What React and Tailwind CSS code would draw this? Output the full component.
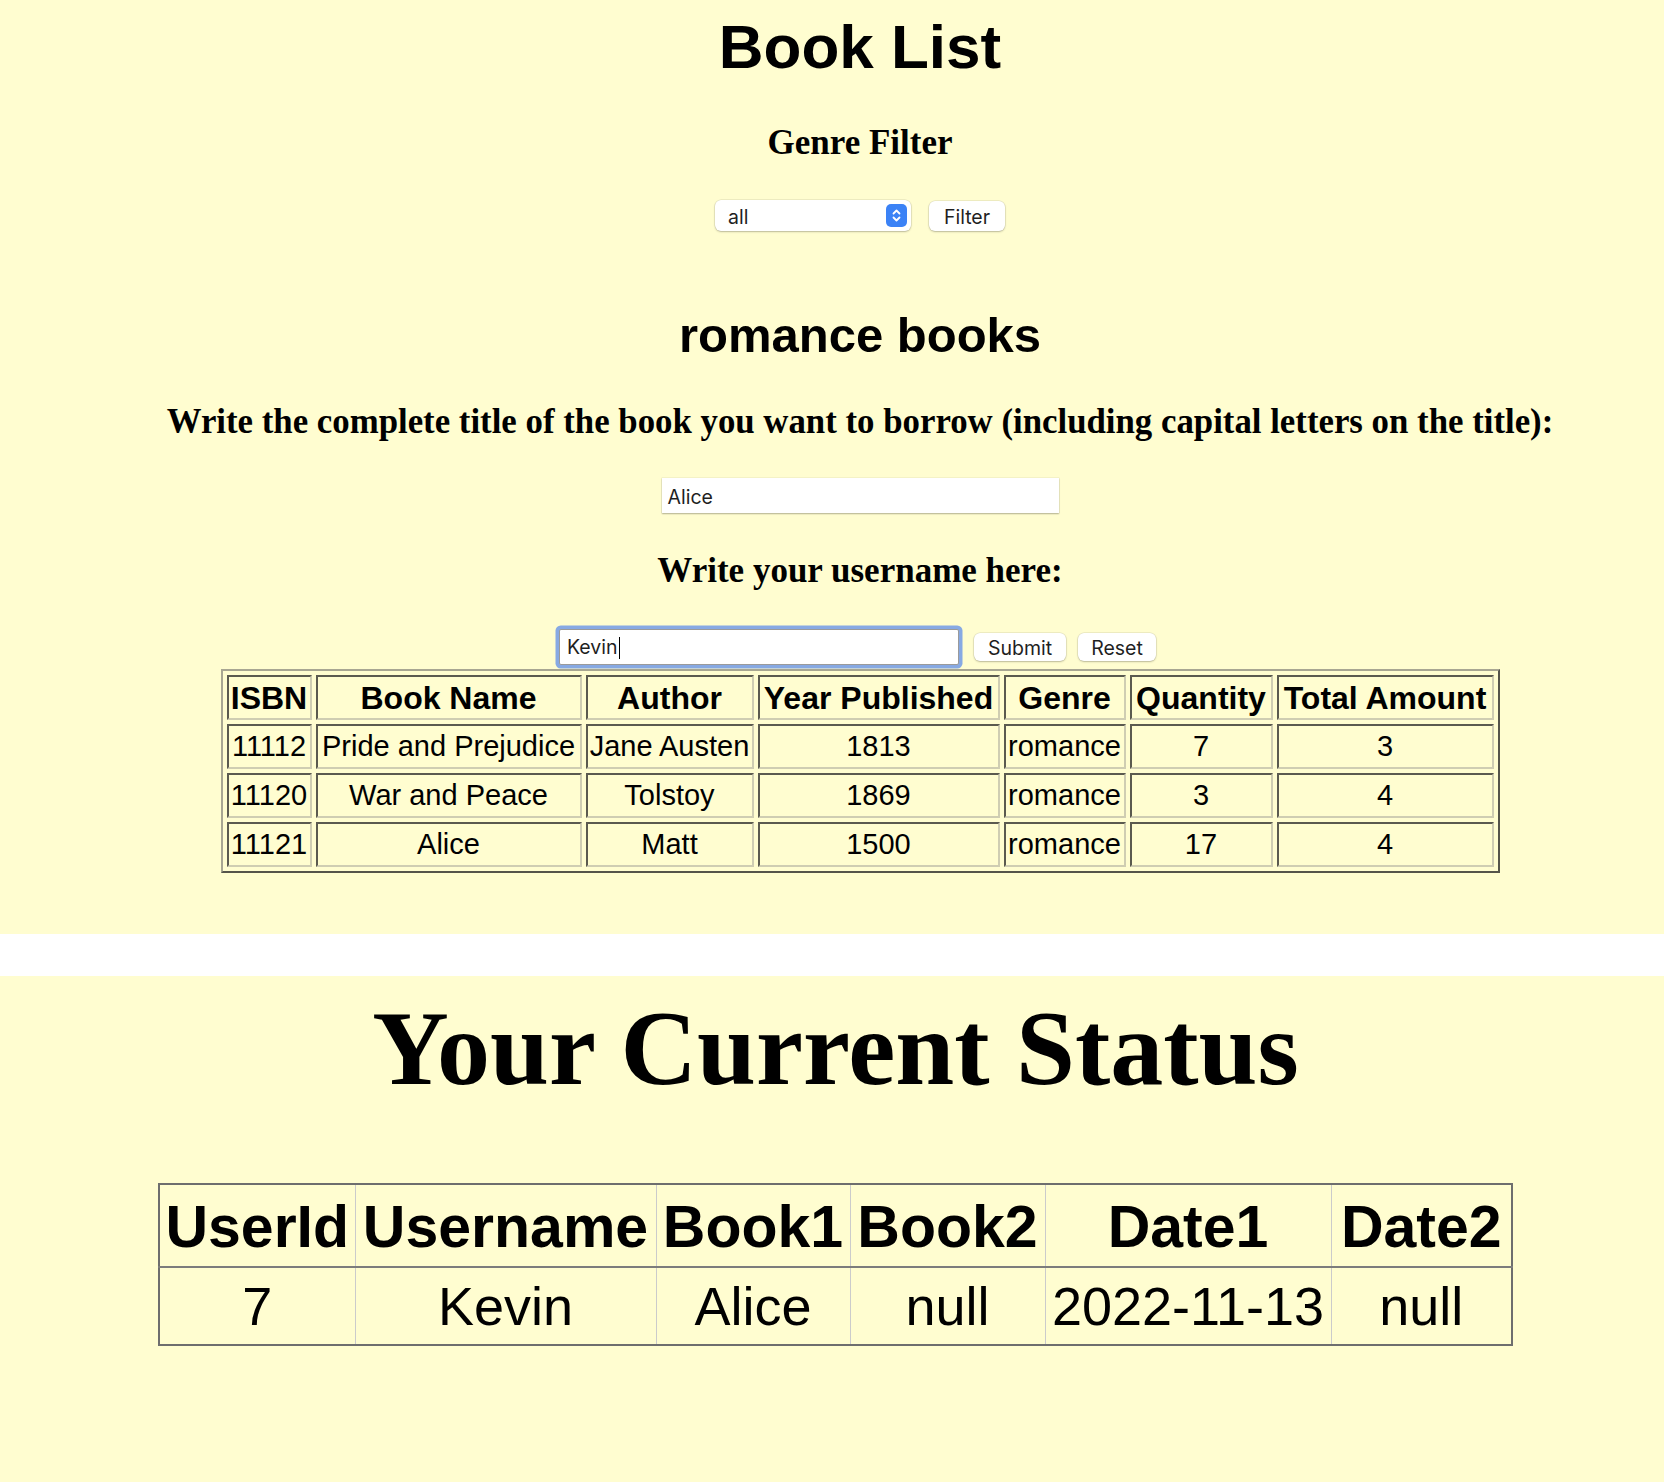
import React from "react";

const books = [
  ["11112", "Pride and Prejudice", "Jane Austen", "1813", "romance", "7", "3"],
  ["11120", "War and Peace", "Tolstoy", "1869", "romance", "3", "4"],
  ["11121", "Alice", "Matt", "1500", "romance", "17", "4"],
];

const bookHeaders = ["ISBN", "Book Name", "Author", "Year Published", "Genre", "Quantity", "Total Amount"];

function SelectArrow() {
  return (
    <div className="w-[21px] h-[23px] rounded-[5px] bg-[#3b82f6] flex items-center justify-center">
      <svg width="11" height="15" viewBox="0 0 11 15" fill="none">
        <path d="M2.5 5.5 L5.5 2.5 L8.5 5.5" stroke="white" strokeWidth="1.8" strokeLinecap="round" strokeLinejoin="round" />
        <path d="M2.5 9.5 L5.5 12.5 L8.5 9.5" stroke="white" strokeWidth="1.8" strokeLinecap="round" strokeLinejoin="round" />
      </svg>
    </div>
  );
}

const ctrl = "font-['Inter','Liberation_Sans',sans-serif] text-[19.5px] text-[#1f1f1f]";
const btn =
  "bg-white rounded-[6px] flex items-center justify-center pt-[4px] shadow-[0_0_0_0.5px_rgba(0,0,0,0.12),0_1px_2px_rgba(0,0,0,0.22)] " +
  ctrl;

export default function App() {
  return (
    <div className="w-[1664px] min-h-[1482px] bg-white">
      {/* Top section */}
      <div className="bg-[#fffdd0] pl-[56px] pb-[61px] flex flex-col items-center text-black">
        <h1 className="mt-[16px] text-[62px] leading-[62px] font-bold font-['Liberation_Sans',Arial,sans-serif]">
          Book List
        </h1>
        <h3 className="mt-[47px] text-[35px] leading-[35px] font-bold font-['Liberation_Serif','Times_New_Roman',serif]">
          Genre Filter
        </h3>
        <div className="mt-[40px] h-[31px] flex items-center gap-[18px]">
          <div
            className={
              "w-[196px] h-[31px] bg-white rounded-[6px] flex items-center justify-between pl-[13px] pr-[4px] shadow-[0_0_0_0.5px_rgba(0,0,0,0.12),0_1px_2px_rgba(0,0,0,0.22)] " +
              ctrl
            }
          >
            <span className="pt-[4px]">all</span>
            <SelectArrow />
          </div>
          <div className={"w-[76px] h-[30px] " + btn}>Filter</div>
        </div>

        <h2 className="mt-[80px] text-[49px] leading-[49px] font-bold font-['Liberation_Sans',Arial,sans-serif]">
          romance books
        </h2>
        <h3 className="mt-[44px] text-[34.8px] leading-[35px] font-bold whitespace-nowrap font-['Liberation_Serif','Times_New_Roman',serif]">
          Write the complete title of the book you want to borrow (including capital letters on the title):
        </h3>
        <div
          className={
            "mt-[39px] w-[397px] h-[35px] bg-white flex items-center pl-[6px] pt-[4px] shadow-[0_0_0_0.5px_rgba(0,0,0,0.08),0_1px_1.5px_rgba(0,0,0,0.28)] " +
            ctrl
          }
        >
          Alice
        </div>
        <h3 className="mt-[40px] text-[35px] leading-[35px] font-bold font-['Liberation_Serif','Times_New_Roman',serif]">
          Write your username here:
        </h3>
        <div className="mt-[41px] mr-[5px] h-[36px] flex items-center">
          <div
            className={
              "w-[400px] h-[36px] bg-white flex items-center pl-[7px] pt-[2px] rounded-[2px] border border-[#9a9a9a] shadow-[0_0_0_3.5px_#87a9e3] " +
              ctrl
            }
          >
            <span>Kevin</span>
            <span className="w-[1.5px] h-[22px] bg-black ml-[1px]" />
          </div>
          <div className={"ml-[15px] w-[92px] h-[28px] " + btn}>Submit</div>
          <div className={"ml-[12px] w-[78px] h-[28px] " + btn}>Reset</div>
        </div>

        <table className="mt-[4px] w-[1279px] table-fixed border-separate border-spacing-[4px] border-2 border-t-[#a8a692] border-l-[#a8a692] border-b-[#55544a] border-r-[#55544a] font-['Liberation_Sans',Arial,sans-serif]">
          <colgroup>
            <col className="w-[85px]" />
            <col className="w-[266px]" />
            <col className="w-[168px]" />
            <col className="w-[242px]" />
            <col className="w-[122px]" />
            <col className="w-[143px]" />
            <col className="w-[217px]" />
          </colgroup>
          <thead>
            <tr>
              {bookHeaders.map((h) => (
                <th
                  key={h}
                  className="h-[45px] p-0 text-center text-[32px] leading-none font-bold whitespace-nowrap border-2 border-t-[#5b5a4f] border-l-[#5b5a4f] border-b-[#cfcdb2] border-r-[#cfcdb2]"
                >
                  {h}
                </th>
              ))}
            </tr>
          </thead>
          <tbody>
            {books.map((row) => (
              <tr key={row[0]}>
                {row.map((c, i) => (
                  <td
                    key={i}
                    className="h-[45px] p-0 text-center text-[29px] leading-none whitespace-nowrap border-2 border-t-[#5b5a4f] border-l-[#5b5a4f] border-b-[#cfcdb2] border-r-[#cfcdb2]"
                  >
                    {c}
                  </td>
                ))}
              </tr>
            ))}
          </tbody>
        </table>
      </div>

      {/* White band */}
      <div className="h-[42px] bg-white" />

      {/* Bottom section */}
      <div className="bg-[#fffdd0] h-[506px] pl-[7px] flex flex-col items-center text-black">
        <h1 className="mt-[20px] text-[106px] leading-[106px] font-bold whitespace-nowrap font-['Liberation_Serif','Times_New_Roman',serif]">
          Your Current Status
        </h1>
        <table className="mt-[81px] w-[1353px] table-fixed border-collapse border-2 border-[#6e6e6e] font-['Liberation_Sans',Arial,sans-serif]">
          <colgroup>
            <col className="w-[196px]" />
            <col className="w-[301px]" />
            <col className="w-[194px]" />
            <col className="w-[195px]" />
            <col className="w-[286px]" />
            <col className="w-[181px]" />
          </colgroup>
          <thead>
            <tr className="h-[83px]">
              {["UserId", "Username", "Book1", "Book2", "Date1", "Date2"].map((h) => (
                <th
                  key={h}
                  className="p-0 pt-[4px] text-center text-[59px] leading-none font-bold whitespace-nowrap border-l border-r border-[#cbcbcb] border-b-2 border-b-[#7c7c7c]"
                >
                  {h}
                </th>
              ))}
            </tr>
          </thead>
          <tbody>
            <tr className="h-[78px]">
              {["7", "Kevin", "Alice", "null", "2022-11-13", "null"].map((c, i) => (
                <td
                  key={i}
                  className="p-0 text-center text-[54px] leading-none whitespace-nowrap border-l border-r border-[#cbcbcb]"
                >
                  {c}
                </td>
              ))}
            </tr>
          </tbody>
        </table>
      </div>
    </div>
  );
}
